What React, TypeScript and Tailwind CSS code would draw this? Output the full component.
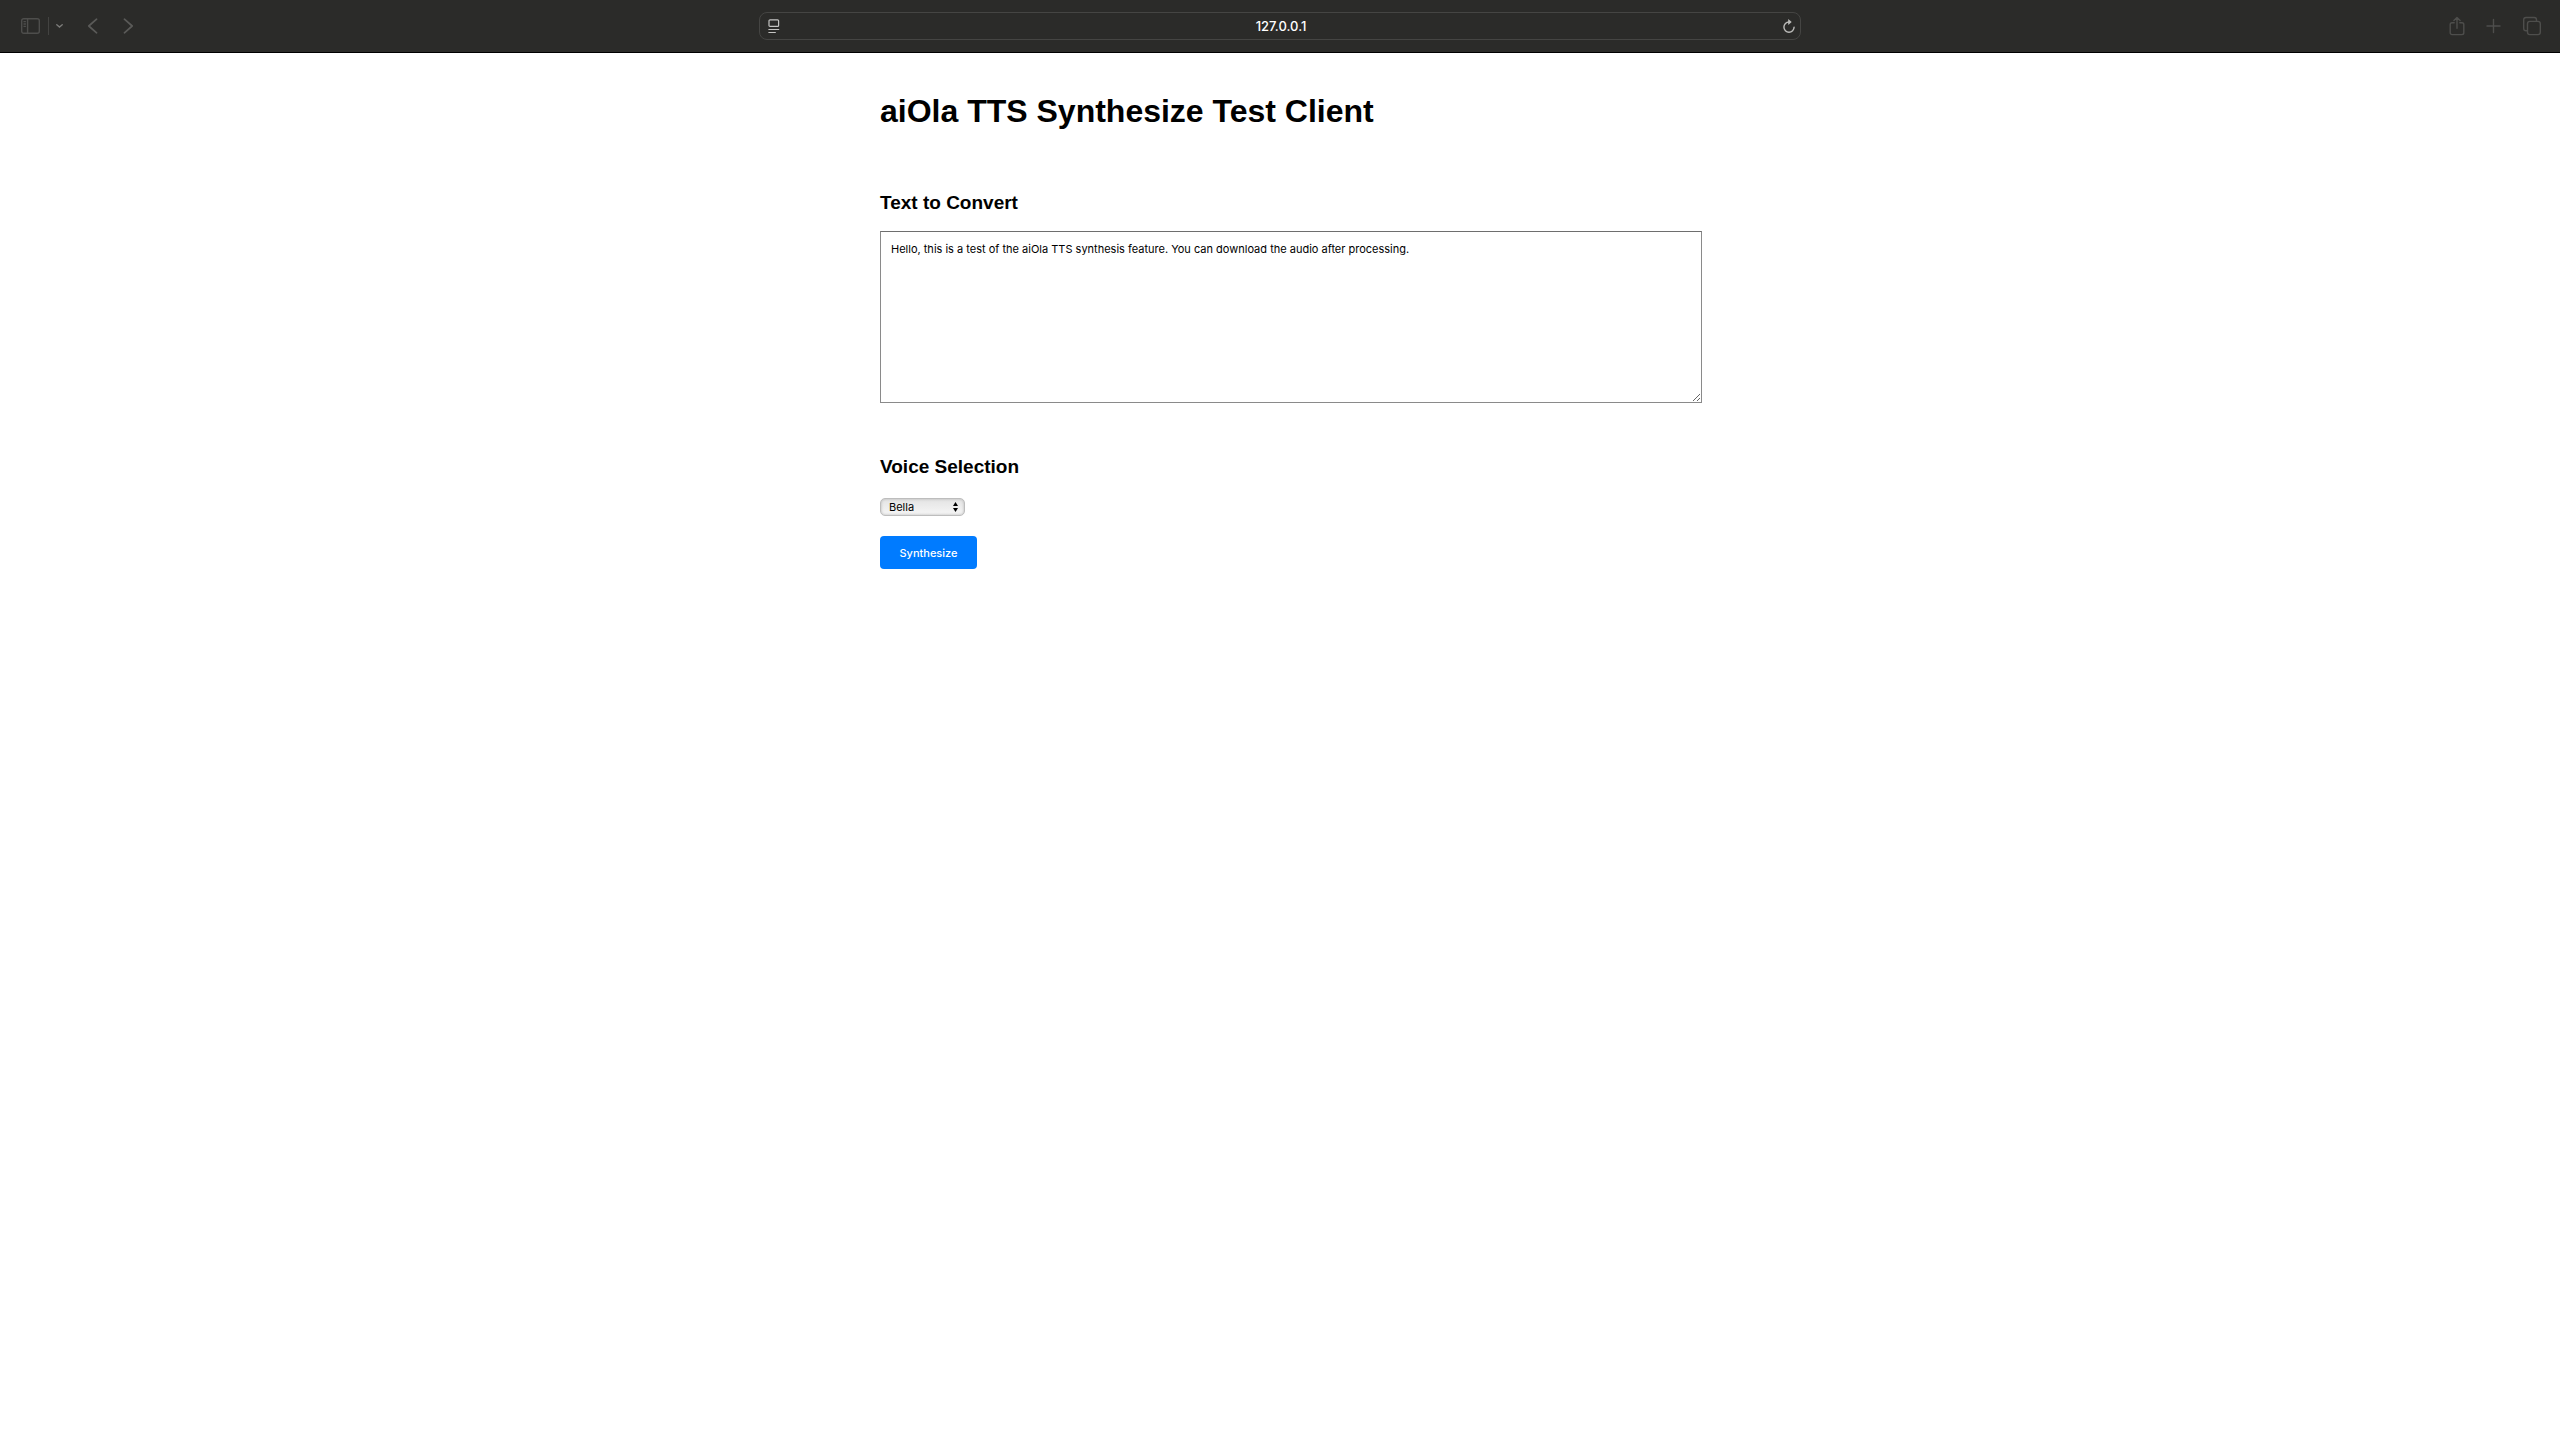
import React, { useState } from "react";

const iconButton = "flex items-center justify-center";

function Toolbar() {
  return (
    <header className="grid grid-cols-[1fr_minmax(0,1042px)_1fr] items-center h-[53px] bg-[#2b2b29] border-b border-black">
      <div className="flex items-center pl-5 text-[#4e4e4c]">
        <button aria-label="Toggle sidebar" className={iconButton}>
          <svg width="21" height="18" viewBox="0 0 21 18" fill="none" stroke="currentColor" strokeWidth="1.4">
            <rect x="1.7" y="1.7" width="17.6" height="14.6" rx="2" />
            <path d="M7.6 2v14M3.5 4.6h2.4M3.5 7h2.4M3.5 9.4h2.4" />
          </svg>
        </button>
        <span className="w-px h-[18px] ml-[7px] bg-[#434341]" />
        <button aria-label="Tab groups" className="flex items-center justify-center ml-[7px] text-[#7b7b79]">
          <svg width="7" height="6" viewBox="0 0 7 6" fill="none" stroke="currentColor" strokeWidth="1.4" strokeLinecap="round">
            <path d="M.8 1.8 3.5 4 6.2 1.8" />
          </svg>
        </button>
        <button aria-label="Back" className="flex items-center justify-center ml-6 text-[#5a5a58]">
          <svg width="12" height="16" viewBox="0 0 12 16" fill="none" stroke="currentColor" strokeWidth="1.7" strokeLinecap="round" strokeLinejoin="round">
            <path d="M9.6 1.2 1.8 8l7.8 6.8" />
          </svg>
        </button>
        <button aria-label="Forward" className="flex items-center justify-center ml-6 text-[#5a5a58]">
          <svg width="12" height="16" viewBox="0 0 12 16" fill="none" stroke="currentColor" strokeWidth="1.7" strokeLinecap="round" strokeLinejoin="round">
            <path d="M1.4 1.2 9.2 8l-7.8 6.8" />
          </svg>
        </button>
      </div>
      <div className="flex items-center h-7 pl-2 pr-1 rounded-lg border border-[#454543]">
        <button aria-label="Page menu" className="text-[#c4c4c2]">
          <svg width="12" height="16" viewBox="0 0 12 16" fill="none" stroke="currentColor" strokeWidth="1.2">
            <rect x="1" y="1.8" width="9.6" height="6.6" rx="1" />
            <path d="M0.4 11.5h10.8M0.4 14.5h7.4" />
          </svg>
        </button>
        <input
          aria-label="Address"
          defaultValue="127.0.0.1"
          className="flex-1 min-w-0 bg-transparent text-center text-[13px] leading-5 font-medium text-white outline-none font-['Inter',sans-serif]"
        />
        <button aria-label="Reload" className="text-[#bcbcba]">
          <svg width="14" height="16" viewBox="0 0 14 16" fill="none" stroke="currentColor" strokeWidth="1.4" strokeLinecap="round">
            <path d="M7 4a5.1 5.1 0 1 0 5.1 5.1" />
            <path d="M6.2.9 9.7 4 6.2 7z" fill="currentColor" stroke="none" />
          </svg>
        </button>
      </div>
      <div className="flex items-center justify-end pr-[18px] text-[#4e4e4c]">
        <button aria-label="Share" className={iconButton}>
          <svg width="16" height="20" viewBox="0 0 16 20" fill="none" stroke="currentColor" strokeWidth="1.4" strokeLinecap="round" strokeLinejoin="round">
            <path d="M5.2 6.8H3a1.8 1.8 0 0 0-1.8 1.8v8.2A1.8 1.8 0 0 0 3 18.6h10a1.8 1.8 0 0 0 1.8-1.8V8.6A1.8 1.8 0 0 0 13 6.8h-2.2M8 12.2V1.6M4.9 4.4 8 1.4l3.1 3" />
          </svg>
        </button>
        <button aria-label="New tab" className="flex items-center justify-center ml-[21px]">
          <svg width="15" height="16" viewBox="0 0 15 16" fill="none" stroke="currentColor" strokeWidth="1.4" strokeLinecap="round">
            <path d="M7.5 1.5v13M1 8h13" />
          </svg>
        </button>
        <button aria-label="Show all tabs" className="flex items-center justify-center ml-[21px]">
          <svg width="20" height="20" viewBox="0 0 20 20" fill="none" stroke="currentColor" strokeWidth="1.4">
            <path d="M5.2 14.8H4A2.3 2.3 0 0 1 1.7 12.5V3.8A2.3 2.3 0 0 1 4 1.5h8.2a2.3 2.3 0 0 1 2.3 2.3v1.4" />
            <rect x="5.5" y="5.4" width="12.8" height="13.2" rx="2.3" />
          </svg>
        </button>
      </div>
    </header>
  );
}

export default function App() {
  const [text, setText] = useState(
    "Hello, this is a test of the aiOla TTS synthesis feature. You can download the audio after processing."
  );
  const [voice, setVoice] = useState("Bella");

  return (
    <div className="min-h-screen bg-white text-black font-['Liberation_Sans',Arial,sans-serif]">
      <Toolbar />
      <main className="max-w-[800px] mx-auto pt-10">
        <h1 className="text-[32px] leading-9 font-bold">aiOla TTS Synthesize Test Client</h1>
        <section className="mt-16">
          <h2 className="text-[19px] leading-5 font-bold">
            <label htmlFor="text">Text to Convert</label>
          </h2>
          <textarea
            id="text"
            value={text}
            onChange={(e) => setText(e.target.value)}
            spellCheck={false}
            className="block mt-[18px] w-[calc(100%+22px)] h-[172px] p-2.5 border border-[#8a8a8a] border-t-[#6e6e6e] bg-white text-[11px] leading-[14px] outline-none resize font-['Inter',sans-serif]"
          />
        </section>
        <section className="mt-[54px]">
          <h2 className="text-[19px] leading-5 font-bold">
            <label htmlFor="voice">Voice Selection</label>
          </h2>
          <div className="grid w-[85px] mt-[21px] items-center">
            <select
              id="voice"
              value={voice}
              onChange={(e) => setVoice(e.target.value)}
              className="col-start-1 row-start-1 appearance-none h-[18px] pl-2 pr-4 rounded-[5px] border border-[#bdbdbd] bg-linear-to-b from-[#e4e4e4] to-[#f6f6f6] shadow-[inset_0_0_3px_#b5b5b5] text-[11px] leading-4 outline-none font-['Inter',sans-serif]"
            >
              <option>Bella</option>
            </select>
            <svg className="col-start-1 row-start-1 justify-self-end mr-[7px] pointer-events-none" width="5" height="10" viewBox="0 0 5 10">
              <path d="M2.5 0 5 4H0zM2.5 10 5 6H0z" />
            </svg>
          </div>
          <button className="mt-5 w-[97px] h-[33px] rounded bg-[#007bff] text-white text-[11px] leading-4 font-medium font-['Inter',sans-serif]">
            Synthesize
          </button>
        </section>
      </main>
    </div>
  );
}
